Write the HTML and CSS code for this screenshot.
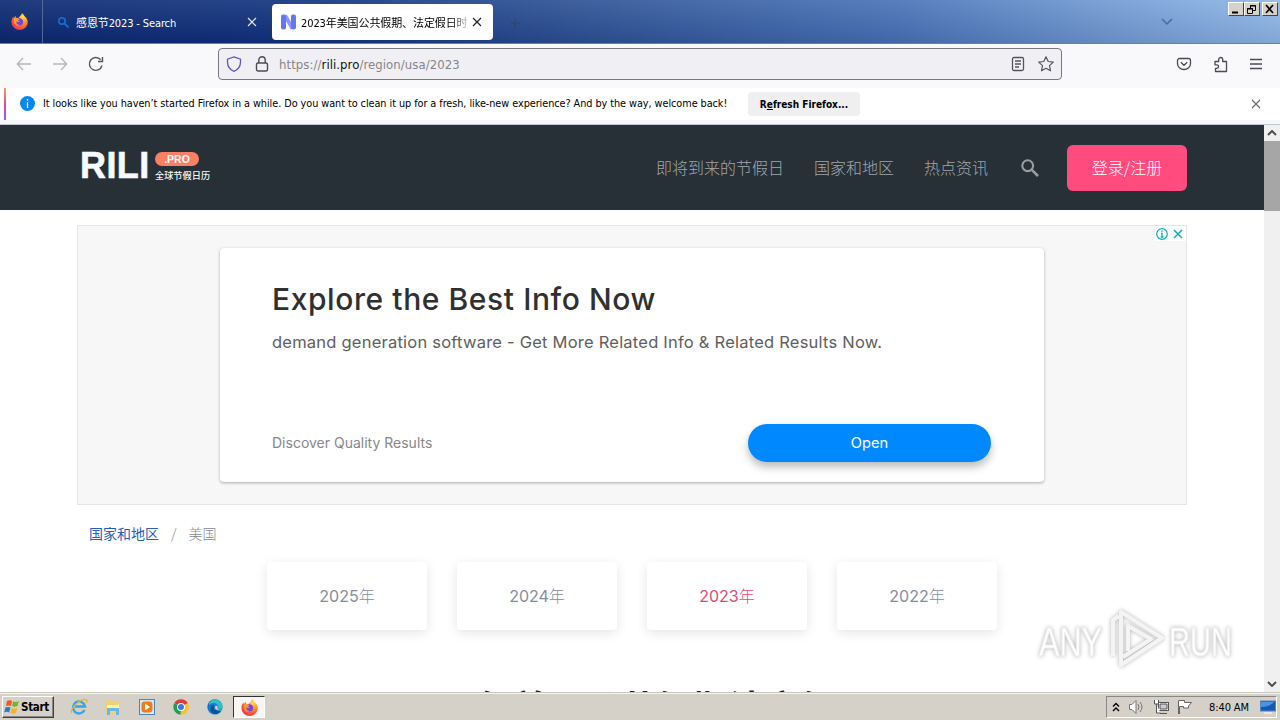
FILE: index.html
```html
<!DOCTYPE html>
<html lang="zh-CN">
<head>
<meta charset="utf-8">
<title>2023年美国公共假期</title>
<link rel="stylesheet" href="styles.css">
</head>
<body>
<svg width="0" height="0" class="defs">
  <defs>
    <radialGradient id="ffg" cx=".7" cy=".2" r=".9"><stop offset="0" stop-color="#ffe14d"/><stop offset=".45" stop-color="#ff8a1e"/><stop offset="1" stop-color="#e82a5c"/></radialGradient>
    <linearGradient id="edge" x1="0" y1="0" x2="1" y2="1"><stop offset="0" stop-color="#135ca8"/><stop offset=".5" stop-color="#1787d5"/><stop offset="1" stop-color="#36c6b0"/></linearGradient>
    <symbol id="firefox" viewBox="0 0 16 16">
      <path d="M10.4.2c1.500 1.100 2.100 2 2.600 3.200 1.600 1.100 2.800 3.200 2.800 5.300A7.600 7.200 0 0 1 .4 8.700c0-2.300.8-4.100 1.700-5.400l.6 1.400 1.700-2.200.5 1.900 2.100.2C8 3 9.400 2.600 10.400.2z" fill="url(#ffg)"/>
      <path d="M6.300 5.300c2.400-1.200 5.200.3 5.200 3s-2.300 3.800-4.400 3.300C5 11.100 4.600 9 5.300 8.300c1 .7 2.500.5 3.100-.5-1.100-.1-2.300-.7-2.100-2.500z" fill="#7542e5"/>
      <path d="M3 4.900c2-.8 4 .1 5.200 1.100-1.600 0-1.500 1.600-3 1.900-.8 2 1.200 3.600 3.200 3.200C5.700 13.700 1.400 10 3 4.900z" fill="#ff9a22"/>
    </symbol>
  </defs>
</svg>
<div class="screen">
  <header class="tabs">
    <div class="view"><svg width="17" height="17"><use href="#firefox"/></svg></div>
    <div class="tab">
      <svg class="tab-icon" width="13" height="13" viewBox="0 0 13 13" fill="none" stroke="#1b69c9" stroke-width="1.800"><circle cx="5" cy="5" r="3.200"/><path d="M7.500 7.500l4 4"/></svg>
      <span class="tab-title one">感恩节2023 - Search</span>
      <svg class="x" width="10" height="10" viewBox="0 0 10 10" stroke="#dfe6f5" stroke-width="1.200"><path d="M1 1l8 8M9 1L1 9"/></svg>
    </div>
    <div class="tab active">
      <svg class="tab-icon" width="15" height="16" viewBox="0 0 15 16"><path d="M4 1.500l7.500 13" stroke="#8f95fa" stroke-width="4"/><rect width="5" height="15" rx="2" y=".5" fill="#6278ef"/><rect x="10" width="5" height="15" rx="2" y=".5" fill="#6278ef"/></svg>
      <span class="tab-title two">2023年美国公共假期、法定假日时</span>
      <svg class="x" width="10" height="10" viewBox="0 0 10 10" stroke="#222" stroke-width="1.200"><path d="M1 1l8 8M9 1L1 9"/></svg>
    </div>
    <svg class="plus" width="10" height="10" stroke="#33435f" stroke-width="1.500"><path d="M0 5h10M5 0v10"/></svg>
    <svg class="chev" width="12" height="8" fill="none" stroke="#49699f" stroke-width="1.500"><path d="M1 1l5 5 5-5"/></svg>
    <div class="wincontrols">
      <i><svg width="14" height="13"><path d="M3 9.500h6" stroke="#000" stroke-width="2"/></svg></i><i><svg width="14" height="13" fill="none" stroke="#000"><path d="M5.500 5V2.500h5v5H8M5 3h6M2.500 5.500h5v5h-5zM2 6h6"/></svg></i><i class="gap"><svg width="14" height="13" stroke="#000" stroke-width="1.700"><path d="M3 2l7 8M10 2l-7 8"/></svg></i>
    </div>
  </header>
  <div class="toolbar">
    <div class="nav">
      <svg width="16" height="16" fill="none" stroke="#b4b4bb" stroke-width="1.300"><path d="M15 8H1.500M7 2L1.300 8 7 14"/></svg>
      <svg width="16" height="16" fill="none" stroke="#b4b4bb" stroke-width="1.300"><path d="M1 8h13.500M9 2l5.700 6L9 14"/></svg>
      <svg width="16" height="16" fill="none" stroke="#55555e" stroke-width="1.400"><path d="M14 9.500a6.400 6.400 0 1 1-1.300-5.700M14.500 1v4.500H10"/></svg>
    </div>
    <div class="url">
      <svg width="16" height="16" fill="none" stroke="#6558bd" stroke-width="1.300"><path d="M8 .9l6.500 2.300v3.200C14.300 11 11.500 14 8 15.300 4.500 14 1.700 11 1.500 6.400V3.200z"/></svg>
      <svg width="14" height="16" fill="none" stroke="#4c4b55" stroke-width="1.400"><rect x="1.500" y="7" width="11" height="8" rx="1.500"/><path d="M3.800 7V4a3.200 3.200 0 0 1 6.400 0v3"/></svg>
      <span class="addr">https://<b>rili.pro</b>/region/usa/2023</span>
      <svg class="reader" width="14" height="16" fill="none" stroke="#55545e" stroke-width="1.300"><rect x="1.500" y="1.500" width="11" height="13" rx="1.500"/><path d="M4 5h6M4 8h6M4 11h4"/></svg>
      <svg width="16" height="16" fill="none" stroke="#55545e" stroke-width="1.200" stroke-linejoin="round"><path d="M8 .8l2.200 4.700 5.100.6-3.800 3.500 1 5.200L8 12.300l-4.500 2.500 1-5.200L.7 6.100l5.100-.6z"/></svg>
    </div>
    <div class="actions">
      <svg width="16" height="16" fill="none" stroke="#4c4b55" stroke-width="1.300"><path d="M3.500 2.500h9a2 2 0 0 1 2 2v3a6.500 6 0 0 1-13 0v-3a2 2 0 0 1 2-2zM4.800 6.300L8 9.300l3.200-3"/></svg>
      <svg width="16" height="17" fill="none" stroke="#4c4b55" stroke-width="1.300" stroke-linejoin="round"><path d="M2 5.500h3.700V3.500a2 2 0 0 1 4 0v2h3.800v10h-11v-3.200h1.300a1.700 1.700 0 0 0 0-3.500H2z"/></svg>
      <svg width="13" height="12" stroke="#4c4b55" stroke-width="1.300"><path d="M0 1.500h12M0 6h12M0 10.500h12"/></svg>
    </div>
  </div>
  <div class="notice">
    <span class="info"><svg width="15" height="15"><circle cx="7.500" cy="7.500" r="7.500" fill="#058be7"/><path d="M7.500 3v1.800M7.500 6.200V12" stroke="#fff" stroke-width="1.300"/></svg></span>
    <span class="msg">It looks like you haven’t started Firefox in a while. Do you want to clean it up for a fresh, like-new experience? And by the way, welcome back!</span>
    <button class="refresh"><span>R<u>e</u>fresh Firefox...</span></button>
    <svg class="dismiss" width="10" height="10" stroke="#66666c" stroke-width="1.100"><path d="M1 1l8 8M9 1L1 9"/></svg>
  </div>
  <div class="content">
    <main class="page">
      <nav class="site">
        <div class="logo">
          <span class="rili">RILI</span>
          <div class="logo-r"><span class="pro"><span>.PRO</span></span><span class="slogan">全球节假日历</span></div>
        </div>
        <div class="links"><a>即将到来的节假日</a><a>国家和地区</a><a>热点资讯</a></div>
        <svg class="search" width="18" height="18" viewBox="0 0 18 18" fill="none" stroke="#9a9ea1"><circle cx="6.700" cy="6.700" r="5.400" stroke-width="2.100"/><path d="M10.800 10.800l6.200 6.200" stroke-width="2.600"/></svg>
        <a class="login">登录/注册</a>
      </nav>
      <section class="ad">
        <div class="adchoice"><svg width="12" height="12" fill="none" stroke="#00b2b8"><circle cx="6" cy="6" r="5.300" stroke-width="1.200"/><path d="M6 2.500v1.500M5 5.500h1V9M4.700 9h2.800" stroke-width="1.300"/></svg><svg width="10" height="10" stroke="#12b3b8" stroke-width="1.600"><path d="M1 1l8 8M9 1L1 9"/></svg></div>
        <div class="adcard">
          <h2><span class="t1">Explore the Best Info Now</span></h2>
          <p><span class="t2">demand generation software - Get More Related Info &amp; Related Results Now.</span></p>
          <div class="adfoot"><span class="t3">Discover Quality Results</span><a class="open">Open</a></div>
        </div>
      </section>
      <div class="crumb"><a>国家和地区</a><span>/</span><span>美国</span></div>
      <div class="years"><a><span>2025</span>年</a><a><span>2024</span>年</a><a class="on"><span>2023</span>年</a><a><span>2022</span>年</a></div>
      <h1>2023年美国公共假期法定假日</h1>
      <svg class="mark" width="200" height="66" viewBox="0 0 200 66">
        <g class="mark-text"><text x="2" y="49" textLength="63" lengthAdjust="spacingAndGlyphs">ANY</text><text x="132" y="49" textLength="63" lengthAdjust="spacingAndGlyphs">RUN</text></g>
        <g class="mark-logo"><path d="M84 51V5l41 26-41 27V51M91 44V19l23 13-28 18M76 49V13l6-4"/></g>
      </svg>
    </main>
    <aside class="scroll">
      <div class="cap"><svg width="10" height="6" fill="none" stroke="#505050" stroke-width="2"><path d="M1 5l4-4 4 4"/></svg></div>
      <div class="thumb"></div>
      <div class="cap end"><svg width="10" height="6" fill="none" stroke="#505050" stroke-width="2"><path d="M1 1l4 4 4-4"/></svg></div>
    </aside>
  </div>
  <footer class="taskbar">
    <div class="start"><svg width="16" height="16"><path d="M3 2q3-1.500 5 0L7 7Q4.500 6 2 7z" fill="#ed5a24"/><path d="M9 2.500q3 1 6-.5l-1.500 5q-3 1.500-5.500 0z" fill="#72b52c"/><path d="M1.500 8.500q2.500-1 5 0l-1.300 5q-2.500-1.500-5 0z" fill="#267ad0"/><path d="M7.700 9q3 1.500 5.500 0L12 14q-3 1.500-5.500 0z" fill="#f6b51b"/></svg><span>Start</span></div>
    <div class="apps">
      <svg width="18" height="18"><path d="M14.500 12A6 6 0 1 1 15 8.500H5" fill="none" stroke="#3ca5df" stroke-width="2.400"/><path d="M2 15C-2 11 13-1 16.500 2c1 1 0 2.500-.5 3" fill="none" stroke="#e4b72c" stroke-width="1.300"/></svg>
      <svg width="18" height="18"><path d="M2 3l5-1 1 2h8v12H2z" fill="#f0d272"/><path d="M3 7h12v3H3z" fill="#fff3ad"/><path d="M3 10h12v7h-3v-4H6v4H3z" fill="#6bb8dc"/></svg>
      <svg width="18" height="18"><rect x="1.500" y="1.500" width="15" height="15" fill="#d4e9f7" stroke="#4787bb"/><rect x="3.500" y="3.500" width="11" height="11" rx="3" fill="#ef7d17"/><path d="M7 5.500v7l5-3.500z" fill="#fff"/></svg>
      <svg width="18" height="18"><path d="M9 9L2.400 5A7.700 7.700 0 0 1 15.800 5.300z" fill="#de3c31"/><path d="M9 9l6.800-3.700A7.700 7.700 0 0 1 8.500 16.700z" fill="#f6c428"/><path d="M9 9l-.5 7.700A7.700 7.700 0 0 1 2.400 5z" fill="#299c51"/><circle cx="9" cy="9" r="4" fill="#fff"/><circle cx="9" cy="9" r="3" fill="#3979e6"/></svg>
      <svg width="18" height="18"><circle cx="9" cy="9" r="7.700" fill="url(#edge)"/><path d="M3 5Q8-1 14 3.500q3 3 2.500 5.500-1 2-4 1.500.5-5-4.500-5.500-3 0-5 2z" fill="#35bfc0"/><path d="M8.500 7c-2 2-.5 6.500 6.300 6-3 5-10.500 3.500-10.500-1.500 0-3 2-4.800 4.200-4.500z" fill="#164f99"/><path d="M9.300 8q2-1 2.300 1-.5 2 1.500 2.700-3 .5-4-1.200z" fill="#d5d0c8"/></svg>
      <div class="running"><svg width="17" height="17"><use href="#firefox"/></svg></div>
    </div>
    <div class="tray">
      <svg width="8" height="11" fill="none" stroke="#000" stroke-width="1.400"><path d="M1 4.500l3-3 3 3M1 9l3-3 3 3"/></svg>
      <svg width="17" height="16" fill="#fff" stroke="#777"><path d="M1.500 5.500H4l4-4v13l-4-4H1.500z"/><path d="M10 5q2 3 0 6M12 3q4 5 0 10" fill="none"/></svg>
      <svg width="16" height="16" fill="#fff" stroke="#555"><rect x="5.500" y="3.500" width="10" height="8"/><path d="M7 14.500h7M1.500 1v4h4V1M3.500 5v9h4"/><path d="M7 5h7v5H7z" fill="#ccc"/></svg>
      <svg width="16" height="16" fill="#fff" stroke="#666"><path d="M1.500 15V1.500h6v2h7l-3 3.500v2h-5V7.500h-4V15"/></svg>
      <span class="clock">8:40 AM</span>
      <svg width="16" height="14"><rect x=".5" y="1" width="15" height="10" fill="#1757b8" stroke="#5c86bd"/><path d="M1 2h13Q9 7 1 7z" fill="#4d94df"/><path d="M4 13h8" stroke="#fff"/></svg>
    </div>
  </footer>
</div>
</body>
</html>
```
FILE: styles.css
```css
*{box-sizing:border-box}
body{margin:0;font-family:"DejaVu Sans Condensed","Noto Sans CJK SC",sans-serif}
.defs{position:absolute}
svg{display:block;flex:none}
.screen{width:1280px;height:720px;display:flex;flex-direction:column;overflow:hidden;background:#fff}
.screen span{white-space:nowrap}
.tabs{height:44px;flex:none;display:flex;align-items:flex-start;background:linear-gradient(180deg,rgba(190,220,255,.12),rgba(0,20,80,.12)),linear-gradient(90deg,#0b266c 0,#12317c 25%,#2e5090 45%,#4a72b4 70%,#7da4d8 90%,#94bbe8 100%);border-bottom:1px solid #6b7ea5}
.view{width:43px;height:43px;border-right:1px solid #52679a;padding:13px 0 0 11px}
.tab{width:221px;height:36px;margin:4px 0 0 4px;display:flex;align-items:center;padding:0 11px 0 10px;color:#fff;font-size:11px}
.tab.active{background:#fff;border-radius:4px;color:#000;margin-left:4px;padding-left:9px;padding-right:11px}
.tab-title{flex:1;overflow:hidden;margin-left:6px;line-height:20px;padding-top:3px}
.one{letter-spacing:-.12px}
.two{margin-left:5px;letter-spacing:-.1px;-webkit-mask-image:linear-gradient(90deg,#000 88%,transparent)}
.plus{margin:18px 0 0 17px;opacity:.6}
.chev{margin:18px 1px 0 auto}
.wincontrols{display:flex;margin:2px 2px 0 54px}
.wincontrols i{width:16px;height:14px;background:#d6d2ca;border:1px solid;border-color:#fff #444 #444 #fff;overflow:hidden}
.wincontrols .gap{margin-left:2px}
.toolbar{height:44px;flex:none;background:#f9f9fb;display:flex;align-items:center;padding:0 17px 4px 16px}
.nav{display:flex;gap:20px;width:202px}
.url{width:844px;height:32px;border:1px solid #77777e;border-radius:4px;background:#f0f0f4;display:flex;align-items:center;padding:0 7px;gap:13px}
.addr{font:13px "DejaVu Sans Condensed",sans-serif;color:#85848b;margin-left:-3px;letter-spacing:.07px}
.addr b{font-weight:400;color:#111}
.reader{margin-left:auto}
.actions{margin-left:auto;display:flex;gap:21px;align-items:center}
.notice{height:37px;flex:none;display:flex;align-items:center;background:#fff;border-bottom:1px solid #bfc6d0;padding:0 19px 5px 16px;position:relative;box-shadow:inset 0 -4px #f7f7fa}
.notice::before{content:"";position:absolute;left:4px;top:0;width:2px;height:32px;background:linear-gradient(#ff9a4d,#e8459c 50%,#9059ff)}
.info{margin-left:4px}
.msg{font-size:10.8px;letter-spacing:-.056px;margin-left:8px;width:685px;color:#000}
.refresh{width:112px;height:24px;border:0;border-radius:4px;background:#efefef;font:bold 10px "DejaVu Sans Condensed",sans-serif;margin-left:20px;padding:2px 0 0;color:#000}
.dismiss{margin-left:auto}
.content{height:567px;flex:none;display:flex}
.page{width:1264px;overflow:hidden;background:#fff;position:relative}
.site{height:85px;background:#283037;display:flex;align-items:center;padding:0 76px 0 80px}
.logo{display:flex;width:576px;color:#f5faff;align-items:center;padding-bottom:4px}
.rili{font:bold 36px/40px "Liberation Sans",sans-serif;width:69px;letter-spacing:.4px;-webkit-text-stroke:.6px #f5faff}
.logo-r{margin-left:6px;display:flex;flex-direction:column;gap:4px;padding-top:1px}
.pro{width:44px;height:14px;border-radius:7px;background:#fb7f62;font:bold 10.5px/14px "Liberation Sans",sans-serif;text-align:center}
.slogan{font:500 9.2px/11px "Noto Sans CJK SC",sans-serif}
.links{display:flex;gap:30px;color:#a2a6aa;font:300 16px "Noto Sans CJK SC",sans-serif;padding-bottom:2px;width:365px}
.login{width:120px;height:46px;border-radius:6px;background:#ff4b7d;color:#fff;font:300 16px/45px "Noto Sans CJK SC",sans-serif;text-align:center;margin:0 1px 0 auto}
.ad{width:1110px;height:280px;margin:15px 0 0 77px;background:#f7f7f7;border:1px solid #e5e5e5;padding:22px 142px;position:relative}
.adchoice{position:absolute;right:0;top:0;background:#fff;width:31px;height:15px;display:flex;gap:5px;align-items:center;padding-left:1px}
.adcard{height:234px;background:#fff;border-radius:4px;box-shadow:0 1px 3px #aaa;padding:32px 53px 0 52px;font-family:Inter,sans-serif}
h2{font-size:30px;line-height:38px;font-weight:500;color:#303030;margin:0;letter-spacing:.58px}
.adcard p{font-size:16.5px;line-height:24px;color:#606060;margin:12px 0 0;letter-spacing:.225px}
.adfoot{display:flex;justify-content:space-between;align-items:center;margin-top:70px;color:#888;font-size:14px}
.t3{padding-bottom:1px}
.open{width:243px;height:38px;border-radius:19px;background:#08f;color:#fff;line-height:39px;text-align:center;font-size:14.7px;box-shadow:0 5px 9px #bbb}
.crumb{display:flex;gap:12px;margin:18px 0 0 89px;font:300 14px/20px "Noto Sans CJK SC",sans-serif;color:#858994}
.crumb a{color:#285db5;font-weight:400}
.years{display:flex;gap:30px;margin:19px 0 0 267px}
.years a{width:160px;height:68px;border-radius:4px;box-shadow:0 3px 12px rgba(0,0,0,.1);color:#858e9c;font:300 16px/67px "Noto Sans CJK SC",sans-serif;text-align:center}
.years span{font-family:Inter,sans-serif;font-weight:400;font-size:16px}
.years .on{color:#dc4c75}
h1{font:bold 36px/44px "Noto Sans CJK SC",sans-serif;margin:54px 0 0;text-align:center;color:#252525;white-space:nowrap}
.mark{position:absolute;left:1037px;top:482px;filter:drop-shadow(0 0 2px rgba(0,0,0,.3))}
.mark-text{font:40px "Liberation Sans",sans-serif;fill:#fff;stroke:#eee;stroke-width:1}
.mark-logo{fill:none;stroke:#f4f4f4;stroke-width:4;stroke-linejoin:round}
.scroll{width:16px;background:#f0f0f0;display:flex;flex-direction:column}
.cap{height:16px;display:grid;place-items:center}
.thumb{height:70px;background:#a6a6a6}
.end{margin-top:auto}
.taskbar{height:28px;flex:none;background:#d5d0c8;border-top:1px solid #c8c8bd;box-shadow:inset 0 1px #f6f5f0;display:flex;align-items:center;padding:1px 3px 0 2px}
.start{width:52px;height:22px;border:1px solid;border-color:#fff #404040 #404040 #fff;box-shadow:inset -1px -1px #888;display:flex;align-items:center;gap:1px;padding-left:1px;font:bold 11.5px "DejaVu Sans Condensed",sans-serif;letter-spacing:-.3px}
.apps{display:flex;align-items:center;gap:16px;margin-left:16px}
.running{width:32px;height:22px;background:#f7f6f4;border:1px solid;border-color:#333 #fff #fff #333;display:grid;place-items:center;margin-left:-7px}
.tray{margin-left:auto;width:171px;height:22px;border:1px solid;border-color:#888 #fff #fff #888;display:flex;align-items:center;gap:8px;padding-left:5px}
.clock{font-size:11px;width:43px;margin:0 2px 0 8px;letter-spacing:-.1px}
```
